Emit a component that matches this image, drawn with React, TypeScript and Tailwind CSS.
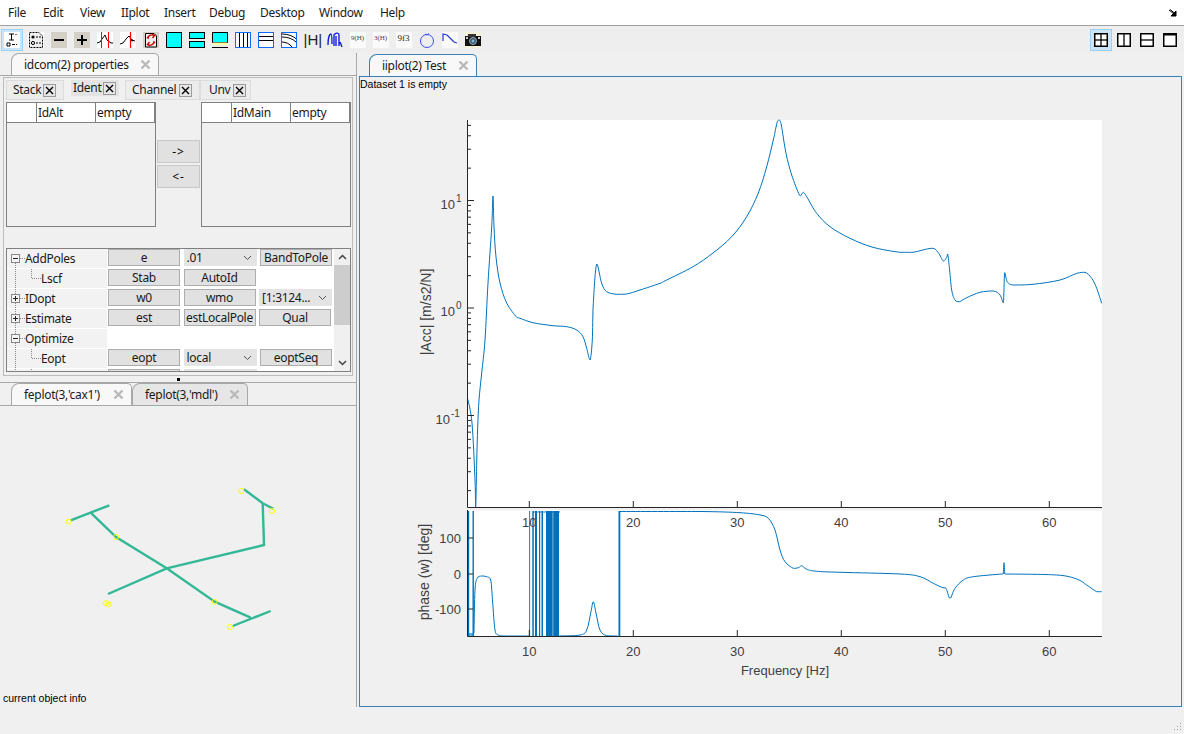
import { ReactNode } from "react";

const menus = [
  { label: "File", cls: "w-[35px]" },
  { label: "Edit", cls: "w-[37px]" },
  { label: "View", cls: "w-[41px]" },
  { label: "IIplot", cls: "w-[43px]" },
  { label: "Insert", cls: "w-[45px]" },
  { label: "Debug", cls: "w-[51px]" },
  { label: "Desktop", cls: "w-[59px]" },
  { label: "Window", cls: "w-[61px]" },
  { label: "Help", cls: "w-[40px]" },
];

const BLUE = "#0072bd";

const magPts =
  "467.5,398 472,423 475,480 475.7,507 476.7,463 477.7,427 479,400 481.7,373 485,340 488,283 491.7,227 493,196 494,227 496,257 500,283 506.7,303 516.7,317.3 520,318.3 533,322.7 553,325.7 566.7,326.7 576.7,330 583,336.7 586.7,348.3 590,360 592.3,340 593.3,303.3 596.7,264 601.7,283.3 606.7,291.7 616.7,294.3 626.7,294 640,290 660,283.3 666.7,280 693,266.7 713,253 731.7,236.7 746.7,216.7 758.3,193 766.7,166.7 773.3,140 777.3,121.7 779.3,120 781.3,125 786,153.3 791.7,175 799.3,195 800.7,195.7 803.3,192.3 806.7,196.7 816.7,213.3 830,226.7 850,238.3 873,247.3 900,252.3 913,252.3 931.7,248.3 938.3,252.7 943.3,261 946.7,257.3 947.7,254 949.3,266.7 951.7,290 955,300 959.3,301.7 966.7,297.7 980,292.3 993.3,291 1000,295 1003.3,302.7 1004.7,272.7 1007.3,281.7 1013.3,285 1033,284.3 1060,280 1076.7,273.3 1085,272.3 1091.7,278.3 1096.7,288.3 1101.7,303.3";

const phaseSegs = [
  "474,633 475,590 477.3,578 481.7,576 486.7,576.7 490.7,580 492.7,603 495,630 498.3,635 506.7,636 529,636",
  "559.3,636 580,635 586.7,630 590.7,613 593.3,601.7 596,613 600,630 606.7,635.7 617.3,636",
  "620,511.5 700,511.5 740,512.7 760,515 768.3,518.3 775,530 780,550 785,561.7 793.3,568.3 798.3,567.7 801.7,565.7 806.7,569.3 816.7,571.3 840,572.3 900,574 920,576.7 933.3,583.3 941.7,587.3 946,588.3 950,598.3 955,588.3 963.3,580 973.3,576.7 1001.7,574 1003.2,574 1004,562.7 1004.8,574 1006,574 1056.7,575 1076.7,579 1086.7,585 1096.7,591.7 1101.7,591.7",
];

// smooth the sampled points, control points kept inside each segment so the peaks don't overshoot
function smooth(s: string) {
  const p = s.split(" ").map((q) => q.split(",").map(Number));
  let d = `M${p[0][0]} ${p[0][1]}`;
  const clamp = (v: number, a: number, b: number) => Math.min(Math.max(a, b), Math.max(Math.min(a, b), v));
  for (let i = 0; i < p.length - 1; i++) {
    const a = p[Math.max(0, i - 1)];
    const b = p[i];
    const c = p[i + 1];
    const e = p[Math.min(p.length - 1, i + 2)];
    const c1x = clamp(b[0] + (c[0] - a[0]) / 6, b[0], c[0]);
    const c2x = clamp(c[0] - (e[0] - b[0]) / 6, b[0], c[0]);
    const c1y = clamp(b[1] + (c[1] - a[1]) / 6, b[1], c[1]);
    const c2y = clamp(c[1] - (e[1] - b[1]) / 6, b[1], c[1]);
    d += `C${c1x} ${c1y} ${c2x} ${c2y} ${c[0]} ${c[1]}`;
  }
  return d;
}

// vertical wraps of the phase, [x, width]
const wraps: [number, number][] = [
  [467, 2.2], [472.5, 1.4], [529.2, 0.9], [532.3, 1.5], [535, 2], [539, 1.2], [541.5, 1.5],
  [546, 6.7], [553.2, 5.8], [618.5, 1.8],
];

const xTicks = [10, 20, 30, 40, 50, 60];
const xOf = (f: number) => 529.3 + (f - 10) * 10.4;

const logTicks: { y: number; major: boolean }[] = [];
for (let d = -2; d <= 1; d++) {
  for (let m = 1; m <= 9; m++) {
    const y = 308 - 107.5 * (d + Math.log10(m));
    if (y >= 120 && y <= 507) logTicks.push({ y, major: m === 1 });
  }
}

function Plots() {
  const textCls = "fill-[#404040] text-[13px] font-['Liberation_Sans',sans-serif] tracking-normal";
  const labelCls = "fill-[#404040] text-[14px] font-['Liberation_Sans',sans-serif] tracking-normal";
  const expCls = "fill-[#404040] text-[10px] font-['Liberation_Sans',sans-serif] tracking-normal";
  return (
    <svg width={821} height={614} viewBox="360 92 821 614" className="block">
      <rect x={468} y={120} width={634} height={387} fill="#fff" />
      <rect x={468} y={510.5} width={634} height={125.5} fill="#fff" />
      <path d={smooth(magPts)} fill="none" stroke={BLUE} strokeWidth={1} />
      {wraps.map(([x, w]) => (
        <rect key={x} x={x} y={511} width={w} height={125} fill={BLUE} />
      ))}
      {phaseSegs.map((s) => (
        <path key={s} d={smooth(s)} fill="none" stroke={BLUE} strokeWidth={1} />
      ))}
      <rect x={533} y={511} width={27} height={2} fill={BLUE} opacity={0.45} />
      <rect x={468} y={633} width={6} height={3} fill={BLUE} opacity={0.6} />

      {/* axes */}
      <path d="M467.5 120V507.5H1102M467.5 510V636.5H1102" fill="none" stroke="#262626" strokeWidth={1} />
      {logTicks.map((t) => (
        <line key={t.y} x1={467.5} x2={t.major ? 474 : 471} y1={t.y} y2={t.y} stroke="#262626" />
      ))}
      {xTicks.map((f) => (
        <g key={f}>
          <line x1={xOf(f)} x2={xOf(f)} y1={507} y2={501} stroke="#262626" />
          <line x1={xOf(f)} x2={xOf(f)} y1={636} y2={630} stroke="#262626" />
          <text x={xOf(f)} y={527} textAnchor="middle" className={textCls}>{f}</text>
          <text x={xOf(f)} y={656} textAnchor="middle" className={textCls}>{f}</text>
        </g>
      ))}
      {[538, 574, 609].map((y) => (
        <line key={y} x1={467.5} x2={473} y1={y} y2={y} stroke="#262626" />
      ))}
      <text x={461} y={543} textAnchor="end" className={textCls}>100</text>
      <text x={461} y={579} textAnchor="end" className={textCls}>0</text>
      <text x={461} y={614} textAnchor="end" className={textCls}>-100</text>

      {[["1", 201], ["0", 308], ["-1", 416]].map(([e, y]) => (
        <g key={e}>
          <text x={e === "-1" ? 450 : 455} y={Number(y) + 8} textAnchor="end" className={textCls}>10</text>
          <text x={e === "-1" ? 451 : 456} y={Number(y) + 1} className={expCls}>{e}</text>
        </g>
      ))}

      <text transform="translate(431 312) rotate(-90)" textAnchor="middle" className={labelCls}>|Acc| [m/s2/N]</text>
      <text transform="translate(429 572) rotate(-90)" textAnchor="middle" className={labelCls}>phase (w) [deg]</text>
      <text x={785} y={675} textAnchor="middle" className={textCls}>Frequency [Hz]</text>
    </svg>
  );
}

function Feplot() {
  const lines = [
    "M70.7 519.3L109.3 504.3",
    "M90.7 511.7L116 536L166.7 567.3L214.7 600.7L250.7 616.7",
    "M232.7 625L270.7 610",
    "M108 593L166.7 567.3L264 544L262.7 502.3",
    "M244 488.3L262.7 502.3L273.3 507.7",
  ];
  const nodes = [
    [68.7, 520.7], [116, 536], [241.3, 490], [272, 510], [106, 602], [108.7, 603.3], [214.7, 600.7], [230, 626],
  ];
  return (
    <svg width={356} height={280} viewBox="0 405 356 280" className="block">
      {lines.map((d) => (
        <path key={d} d={d} fill="none" stroke="#33b896" strokeWidth={2.4} />
      ))}
      {nodes.map(([x, y]) => (
        <circle key={x} cx={x} cy={y} r={2.5} fill="none" stroke="#ffff00" strokeWidth={1} />
      ))}
    </svg>
  );
}

function GrayX() {
  return (
    <svg width={11} height={11} viewBox="0 0 11 11" className="shrink-0">
      <path d="M1.5 1.5L9.5 9.5M9.5 1.5L1.5 9.5" stroke="#b9b9b9" strokeWidth={2.4} />
    </svg>
  );
}

function DockTab({ label, active, blue, className }: { label: string; active?: boolean; blue?: boolean; className: string }) {
  return (
    <div
      className={`flex h-[22px] shrink-0 items-center justify-between rounded-t-[5px] rounded-tl-[8px] border border-b-0 pl-[12px] pr-[7px] text-[12px] text-[#1a1a1a] ${className} ${
        blue ? "border-[#3c7fb1]" : "border-[#a8a8a8]"
      } ${active ? "bg-[#f8f8f8]" : "bg-[#e6e6e6]"}`}
    >
      <span>{label}</span>
      <GrayX />
    </div>
  );
}

function SubTab({ label, className, closeCls }: { label: string; className: string; closeCls: string }) {
  return (
    <div className={`flex shrink-0 items-center text-[12px] text-[#1a1a1a] ${className}`}>
      <span>{label}</span>
      <span className={`ml-auto flex h-[13px] w-[13px] items-center justify-center border border-[#9a9a9a] bg-[#e6e6e6] ${closeCls}`}>
        <svg width={9} height={9} viewBox="0 0 9 9">
          <path d="M1 1L8 8M8 1L1 8" stroke="#000" strokeWidth={1.4} />
        </svg>
      </span>
    </div>
  );
}

function PropTable({ name }: { name: string }) {
  return (
    <div className="h-[125px] w-[150px] shrink-0 border border-[#808080] bg-[#f0f0f0]">
      <div className="flex h-[20px] border-b border-[#808080] bg-white text-[12px] leading-[20px] text-[#1a1a1a]">
        <div className="w-[30px] border-r border-[#808080]" />
        <div className="w-[59px] border-r border-[#808080] pl-[1px]">{name}</div>
        <div className="flex-1 border-r border-[#808080] pl-[1px]">empty</div>
      </div>
    </div>
  );
}

function Btn({ children }: { children?: ReactNode }) {
  return (
    <div className="flex h-[17px] w-[72px] shrink-0 items-center justify-center border border-[#adadad] bg-[#e1e1e1] text-[12px] text-[#1a1a1a]">
      {children}
    </div>
  );
}

function Sel({ children }: { children?: ReactNode }) {
  return (
    <div className="flex h-[17px] w-[73px] shrink-0 items-center justify-between bg-[#e4e4e4] pl-[3px] pr-[5px] text-[12px] text-[#1a1a1a]">
      <span>{children}</span>
      <svg width={9} height={6} viewBox="0 0 9 6">
        <path d="M1 1L4.5 4.5L8 1" fill="none" stroke="#555" />
      </svg>
    </div>
  );
}

type TreeRow = { label: string; level: number; box?: "-" | "+"; cells: ReactNode[] };

const treeRows: TreeRow[] = [
  { label: "AddPoles", level: 0, box: "-", cells: [<Btn>e</Btn>, <Sel>.01</Sel>, <Btn>BandToPole</Btn>] },
  { label: "Lscf", level: 1, cells: [<Btn>Stab</Btn>, <Btn>AutoId</Btn>] },
  { label: "IDopt", level: 0, box: "+", cells: [<Btn>w0</Btn>, <Btn>wmo</Btn>, <Sel>[1:3124...</Sel>] },
  { label: "Estimate", level: 0, box: "+", cells: [<Btn>est</Btn>, <Btn>estLocalPole</Btn>, <Btn>Qual</Btn>] },
  { label: "Optimize", level: 0, box: "-", cells: [] },
  { label: "Eopt", level: 1, cells: [<Btn>eopt</Btn>, <Sel>local</Sel>, <Btn>eoptSeq</Btn>] },
  { label: "", level: 1, cells: [<Btn />, <Sel />] },
];

function Gutter({ row, first }: { row: TreeRow; first: boolean }) {
  const d = "1 1";
  return (
    <svg width={row.level ? 33 : 17} height={20} className="shrink-0">
      {/* dotted tree lines */}
      <line x1={7.5} x2={7.5} y1={first ? 10 : 0} y2={20} stroke="#888" strokeDasharray={d} />
      {row.level === 1 && <path d="M23.5 0V9.5H33" fill="none" stroke="#888" strokeDasharray={d} />}
      {row.box && (
        <g>
          <line x1={12} x2={17} y1={9.5} y2={9.5} stroke="#888" strokeDasharray={d} />
          <rect x={3.5} y={5.5} width={8} height={8} fill="#f4f4f4" stroke="#888" />
          <line x1={5} x2={10} y1={9.5} y2={9.5} stroke="#222" />
          {row.box === "+" && <line x1={7.5} x2={7.5} y1={7} y2={12} stroke="#222" />}
        </g>
      )}
    </svg>
  );
}

function Tree() {
  return (
    <div className="flex h-[124px] w-[345px] overflow-hidden border border-[#808080] bg-white">
      <div className="w-[327px] shrink-0">
        {treeRows.map((row, i) => (
          <div key={i} className="flex h-[20px] items-start">
            <div className="flex h-[19px] w-[100px] shrink-0 items-center overflow-hidden bg-[#f2f2f2] pl-[1px] text-[12px] text-[#1a1a1a]">
              <Gutter row={row} first={i === 0} />
              <span>{row.label}</span>
            </div>
            <div className="ml-[1px] flex gap-[3.5px]">{row.cells.map((c, j) => <span key={j} className="contents">{c}</span>)}</div>
          </div>
        ))}
      </div>
      {/* scrollbar */}
      <div className="flex w-[16px] shrink-0 flex-col items-center bg-[#f0f0f0]">
        <div className="flex h-[16px] items-center">
          <svg width={9} height={6} viewBox="0 0 9 6"><path d="M1 5L4.5 1.5L8 5" fill="none" stroke="#444" strokeWidth={1.5} /></svg>
        </div>
        <div className="h-[60px] w-full bg-[#cdcdcd]" />
        <div className="mt-auto flex h-[16px] items-center">
          <svg width={9} height={6} viewBox="0 0 9 6"><path d="M1 1L4.5 4.5L8 1" fill="none" stroke="#444" strokeWidth={1.5} /></svg>
        </div>
      </div>
    </div>
  );
}

/* toolbar icons, all 16x16 */
function Ico({ children, bg }: { children: ReactNode; bg?: string }) {
  return (
    <svg width={16} height={16} viewBox="0 0 16 16" className="block">
      {bg && <rect width={16} height={16} fill={bg} />}
      {children}
    </svg>
  );
}

const cyan = "#00ffff";
const toolIcons: ReactNode[] = [
  <Ico bg="#fff"><path d="M5 2H10M7.5 2V8M5 8H10M3 11h3v3h-3zM8 12.5h3M12 12.5h1M12 2v1" fill="none" stroke="#000" /></Ico>,
  <Ico bg="#fff"><path d="M1.5 .5H11L14.5 4V15.5H1.5Z" fill="#eee" stroke="#000" strokeDasharray="2 1" /><circle cx={5} cy={5} r={1.6} /><circle cx={5} cy={11} r={1.6} fill="none" stroke="#000" /><path d="M8 5H13M8 11H13" stroke="#000" strokeDasharray="2 1" /></Ico>,
  <Ico bg="#d4d0c8"><path d="M3 8H13" stroke="#000" strokeWidth={2} /></Ico>,
  <Ico bg="#d4d0c8"><path d="M3 8H13M8 3V13" stroke="#000" strokeWidth={2} /></Ico>,
  <Ico bg="#fff"><path d="M0 11L3 10L5 7L8 3L10 8L14 11L16 11" fill="none" stroke="#000" /><path d="M4.5 0V16M11.5 0V16" stroke="#f00" /></Ico>,
  <Ico bg="#fff"><path d="M0 12L3 11L6 7L9 4L12 8L15 9" fill="none" stroke="#000" /><path d="M10.5 0V16" stroke="#f00" strokeWidth={1.2} /><circle cx={12} cy={8.5} r={1} /></Ico>,
  <Ico bg="#d4d0c8"><path d="M2.5 1.5H11L13.5 4V15H2.5Z" fill="#eee" stroke="#000" /><path d="M11 3.5A4 4 0 0 0 5 6L4 5M5 12.5A4 4 0 0 0 11 10L12 11M9 2L11.5 3.5L9.5 6M7 14L4.5 12.5L6.5 10" fill="none" stroke="#d00000" strokeWidth={1.4} /></Ico>,
  <Ico><rect x={.5} y={.5} width={15} height={15} fill={cyan} stroke="#000" /></Ico>,
  <Ico><rect x={.5} y={.5} width={15} height={6} fill={cyan} stroke="#000" /><rect x={.5} y={9.5} width={15} height={6} fill={cyan} stroke="#000" /></Ico>,
  <Ico><rect x={.5} y={.5} width={15} height={10} fill={cyan} stroke="#000" /><rect x={.5} y={10.5} width={15} height={2.5} fill="#ffffa0" /><path d="M0 15.5H16" stroke="#000" /></Ico>,
  <Ico bg="#fff"><rect x={.5} y={.5} width={15} height={15} fill="none" stroke="#0a6cff" /><path d="M4.5 1V15M8.5 1V15M12.5 1V15" stroke="#000" /></Ico>,
  <Ico bg="#fff"><rect x={.5} y={.5} width={15} height={15} fill="none" stroke="#0a6cff" /><path d="M1 4.5H15M1 8.5H15" stroke="#000" /></Ico>,
  <Ico bg="#fff"><path d="M1 2C7 2 12 4 15.5 7M1 5C7 5 12 7 15 10M1 10C5 10 9 12 11 15" fill="none" stroke="#000" /><rect x={.5} y={.5} width={15} height={15} fill="none" stroke="#0a6cff" /></Ico>,
  <span className="block w-[16px] text-center text-[15px] leading-[16px] tracking-normal text-[#222] font-['Liberation_Sans',sans-serif]">|H|</span>,
  <Ico><path d="M1 13C1 8 2 2 4 2C5 2 5 8 5 12M7 14V3C9 0 12 1 12 3V14M9 4V14M13 10L15 15" fill="none" stroke="#1420e0" strokeWidth={1.4} /></Ico>,
  <span className="block h-[16px] w-[16px] bg-[#fafafa] text-center font-['Liberation_Serif',serif] text-[7px] leading-[12px] tracking-normal text-[#444]">9(H)</span>,
  <span className="block h-[16px] w-[16px] bg-[#fafafa] text-center font-['Liberation_Serif',serif] text-[7px] leading-[12px] tracking-normal text-[#444]">3(H)</span>,
  <span className="block h-[16px] w-[16px] bg-[#fafafa] text-center font-['Liberation_Serif',serif] text-[9px] leading-[13px] tracking-normal text-[#222]">9f3</span>,
  <Ico><circle cx={8} cy={9} r={6.5} fill="none" stroke="#3a50e8" /><path d="M6 2L8 3L10 1.5" fill="none" stroke="#3a50e8" /></Ico>,
  <Ico bg="#fafafa"><path d="M1 9V2L5 3L9 7L12 10L15 11" fill="none" stroke="#2438d0" strokeWidth={1.2} /></Ico>,
  <Ico bg="#f5f0d8"><rect x={0} y={4} width={16} height={10} fill="#111" /><rect x={3} y={2} width={8} height={3} fill="#333" /><circle cx={8} cy={9} r={3.5} fill="#456" stroke="#9ab" /><circle cx={8} cy={9} r={1.5} fill="#7bd" /><rect x={1} y={5} width={2} height={2} fill="#ccc" /><rect x={13} y={5} width={2} height={2} fill="#ccc" /></Ico>,
];

function LayoutIcon({ kind, active }: { kind: "grid" | "cols" | "rows" | "one"; active?: boolean }) {
  return (
    <div className={`flex h-[22px] w-[22px] items-center justify-center ${active ? "border border-[#99d1ff] bg-[#cce4f7]" : ""}`}>
      <svg width={14} height={14} viewBox="0 0 14 14">
        <rect x={.75} y={.75} width={12.5} height={12.5} fill="#fff" stroke="#000" strokeWidth={1.5} />
        {(kind === "grid" || kind === "cols") && <path d="M7 1V13" stroke="#000" strokeWidth={1.3} />}
        {(kind === "grid" || kind === "rows") && <path d="M1 7H13" stroke="#000" strokeWidth={1.3} />}
        {kind === "one" && <path d="M1 1.5H13" stroke="#000" strokeWidth={2} />}
      </svg>
    </div>
  );
}

export default function App() {
  return (
    <div className="flex h-[734px] w-[1184px] flex-col overflow-hidden bg-[#f0f0f0] font-['Noto_Sans',sans-serif] text-[12px] tracking-[-0.3px]">
      {/* Menu bar */}
      <div className="flex h-[26px] shrink-0 items-center border-b border-[#a0a0a0] bg-white pl-[8px] pr-[7px] text-[#1a1a1a]">
        <div className="flex text-[12px]">
          {menus.map((m) => (
            <span key={m.label} className={m.cls}>{m.label}</span>
          ))}
        </div>
        <svg width={8} height={8} viewBox="0 0 8 8" className="ml-auto">
          <path d="M0 1L5 5M1 .5L6 4.5M7 2V7H2Z" fill="#000" stroke="#000" />
        </svg>
      </div>

      {/* Toolbar */}
      <div className="flex h-[27px] shrink-0 items-center bg-[#eeeeee] pl-[1px] pr-[3px]">
        <div className="mr-px flex h-[22px] w-[22px] items-center justify-center border border-[#99d1ff] bg-[#cce4f7]">{toolIcons[0]}</div>
        {toolIcons.slice(1).map((ic, i) => (
          <div key={i} className="flex h-[22px] w-[23px] items-center justify-center">{ic}</div>
        ))}
        <div className="ml-auto flex gap-px">
          <LayoutIcon kind="grid" active />
          <LayoutIcon kind="cols" />
          <LayoutIcon kind="rows" />
          <LayoutIcon kind="one" />
        </div>
      </div>

      <div className="flex h-[654px] shrink-0">
        {/* Left column */}
        <div className="flex w-[357px] shrink-0 flex-col border-r border-[#a8a8a8]">
          <div className="flex h-[23px] shrink-0 items-end border-b border-[#a8a8a8] pl-[11px]">
            <DockTab label="idcom(2) properties" active className="w-[148px]" />
          </div>
          <div className="mx-[3px] mt-[1px] h-[299px] shrink-0 border border-[#bcbcbc] px-[2px]">
            <div className="flex h-[24px] items-center">
              <SubTab label="Stack" className="h-[20px] w-[58px] border border-[#dcdcdc] bg-[#ececec] pl-[6px]" closeCls="mr-[7px]" />
              <SubTab label="Ident" className="-mt-[4px] ml-[7px] h-[16px] w-[48px] bg-[#e4e4e4] pl-[2px]" closeCls="mr-[3px]" />
              <SubTab label="Channel" className="ml-[6px] h-[20px] w-[75px] border border-[#dcdcdc] bg-[#ececec] pl-[6px]" closeCls="mr-[7px]" />
              <SubTab label="Unv" className="h-[20px] w-[51px] border border-[#dcdcdc] bg-[#ececec] pl-[8px]" closeCls="mr-[4px]" />
            </div>
            <div className="flex items-start">
              <PropTable name="IdAlt" />
              <div className="flex w-[45px] shrink-0 flex-col items-center gap-[2px] pt-[38px]">
                <div className="flex h-[23px] w-[43px] items-center justify-center border border-[#c8c8c8] bg-[#e1e1e1] text-[12px] tracking-[1px]">-&gt;</div>
                <div className="flex h-[23px] w-[43px] items-center justify-center border border-[#c8c8c8] bg-[#e1e1e1] text-[12px] tracking-[1px]">&lt;-</div>
              </div>
              <PropTable name="IdMain" />
            </div>
            <div className="mt-[21px]">
              <Tree />
            </div>
          </div>
          {/* Splitter */}
          <div className="flex h-[6px] shrink-0 items-center justify-center">
            <div className="h-[3px] w-[3px] bg-black" />
          </div>
          <div className="h-px shrink-0 bg-[#a8a8a8]" />
          <div className="flex h-[23px] shrink-0 items-end border-b border-[#a8a8a8] pl-[11px]">
            <DockTab label="feplot(3,'cax1')" active className="w-[121px]" />
            <DockTab label="feplot(3,'mdl')" className="w-[116px]" />
          </div>
          <div className="flex flex-1 flex-col bg-[#f0f0f0]">
            <Feplot />
            <div className="mt-auto pb-[2px] pl-[3px] font-['Liberation_Sans',sans-serif] text-[10.5px] leading-[13px] tracking-normal text-black">current object info</div>
          </div>
        </div>

        {/* Right column */}
        <div className="flex flex-1 flex-col pl-[2px] pr-[2px]">
          <div className="flex h-[23px] shrink-0 items-end pl-[10px]">
            <DockTab label="iiplot(2) Test" active blue className="w-[108px]" />
          </div>
          <div className="flex-1 border border-[#3c7fb1] bg-[#f0f0f0]">
            <div className="h-[15px] font-['Liberation_Sans',sans-serif] text-[10.5px] leading-[15px] tracking-normal text-black">Dataset 1 is empty</div>
            <Plots />
          </div>
        </div>
      </div>

      {/* Status bar */}
      <div className="flex flex-1 items-end justify-end pb-[2px] pr-[2px]">
        <svg width={10} height={10} viewBox="0 0 10 10">
          <path d="M8 1h1v1h-1zM5 4h1v1h-1zM8 4h1v1h-1zM2 7h1v1h-1zM5 7h1v1h-1zM8 7h1v1h-1z" fill="#a0a0a0" />
        </svg>
      </div>
    </div>
  );
}
